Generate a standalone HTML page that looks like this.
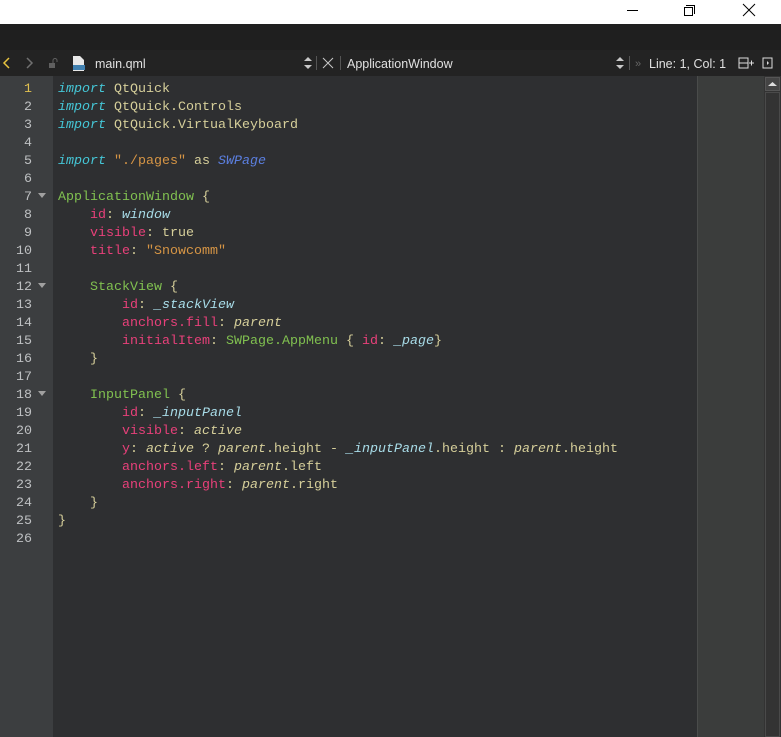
<!DOCTYPE html>
<html><head><style>
body{margin:0;width:781px;height:737px;overflow:hidden;background:#2e2f31;position:relative;font-family:"Liberation Sans",sans-serif}
.a{position:absolute}
#code{position:absolute;left:58px;top:81px;font-family:"Liberation Mono",monospace;font-size:13.33px;line-height:18px;color:#d6cf9a;white-space:pre}
#nums{position:absolute;left:0;top:81px;width:32px;text-align:right;font-family:"Liberation Mono",monospace;font-size:13.33px;line-height:18px;color:#bec0c2;white-space:pre}
.k{color:#45c6d6;font-style:italic}.s{color:#d69545}.b{color:#5b7fe0;font-style:italic}
.g{color:#80c050}.p{color:#e8407a}.i{color:#a8dce8;font-style:italic}.y{color:#d6cf9a;font-style:italic}.w{color:#d6cf9a}
.tri{position:absolute;left:38px;width:0;height:0;border-left:4px solid transparent;border-right:4px solid transparent;border-top:5px solid #a0a0a0}
.tb{position:absolute;top:51px;font-size:12.5px;color:#e0e0e0;line-height:26px}
</style></head><body>
<div class="a" style="left:0;top:0;width:781px;height:24px;background:#fff"></div>
<div class="a" style="left:627px;top:10px;width:11px;height:1px;background:#000"></div>
<div class="a" style="left:686px;top:5px;width:8px;height:8px;border:1px solid #000;border-left:none;border-bottom:none"></div>
<div class="a" style="left:684px;top:7px;width:7px;height:7px;border:1px solid #000;background:#fff"></div>
<svg class="a" style="left:742px;top:3px" width="14" height="14"><path d="M1 1L13 13M13 1L1 13" stroke="#000" stroke-width="1"/></svg>
<div class="a" style="left:0;top:24px;width:781px;height:26px;background:#1f1f1f"></div>
<div class="a" style="left:0;top:50px;width:781px;height:26px;background:#232323"></div>
<svg class="a" style="left:0;top:50px" width="120" height="26"><path d="M9 8L4 13L9 18" stroke="#e8c440" stroke-width="1.5" fill="none"/><path d="M27 8L32 13L27 18" stroke="#707070" stroke-width="1.5" fill="none"/>
<rect x="49" y="13" width="6" height="5" fill="#606060"/><path d="M53 13V10.5a2 2 0 0 1 4 0V12" stroke="#606060" fill="none"/>
<path d="M73 6h7l4 4v11h-11z" fill="#e8e8e8"/><rect x="73" y="15" width="12" height="5" fill="#4080b0"/></svg>
<div class="tb" style="left:95px">main.qml</div>
<svg class="a" style="left:300px;top:50px" width="50" height="26"><path d="M4 11L8 7L12 11zM4 15L8 19L12 15z" fill="#c8c8c8"/><rect x="16" y="6" width="1" height="14" fill="#555"/><path d="M23 8L33 18M33 8L23 18" stroke="#c8c8c8"/><rect x="40" y="6" width="1" height="14" fill="#555"/></svg>
<div class="tb" style="left:347px">ApplicationWindow</div>
<svg class="a" style="left:610px;top:50px" width="171" height="26"><path d="M6 11L10 7L14 11zM6 15L10 19L14 15z" fill="#c8c8c8"/><rect x="19" y="6" width="1" height="14" fill="#555"/><text x="25" y="17" fill="#666" font-size="11" font-family="Liberation Sans">»</text>
<rect x="129" y="8" width="9" height="10" fill="none" stroke="#ddd"/><path d="M129 13h9M139 13h5M141.5 10.5v5" stroke="#ddd"/><rect x="153" y="8" width="9" height="10" fill="none" stroke="#ddd"/><path d="M157 11l2 2l-2 2z" fill="#ddd"/></svg>
<div class="tb" style="left:649px">Line: 1, Col: 1</div>
<div class="a" style="left:0;top:76px;width:53px;height:661px;background:#3c3e40"></div>
<div class="a" style="left:697px;top:76px;width:67px;height:661px;background:#3b3d3c;border-left:1px solid #4a4c4b"></div>
<div class="a" style="left:764px;top:76px;width:17px;height:661px;background:#333"></div>
<div class="a" style="left:765px;top:77px;width:15px;height:14px;background:#444;border:1px solid #555;box-sizing:border-box"></div>
<svg class="a" style="left:765px;top:77px" width="15" height="14"><path d="M3 9L7.5 5L12 9z" fill="#ddd"/></svg>
<div class="a" style="left:765px;top:92px;width:15px;height:645px;border:1px solid #4a4a4a;box-sizing:border-box"></div>
<div id="nums"><span style="color:#e0c050">1</span>
2
3
4
5
6
7
8
9
10
11
12
13
14
15
16
17
18
19
20
21
22
23
24
25
26</div>
<div class="tri" style="top:193px"></div>
<div class="tri" style="top:283px"></div>
<div class="tri" style="top:391px"></div>
<div id="code"><span class="k">import</span> QtQuick
<span class="k">import</span> QtQuick.Controls
<span class="k">import</span> QtQuick.VirtualKeyboard

<span class="k">import</span> <span class="s">"./pages"</span> as <span class="b">SWPage</span>

<span class="g">ApplicationWindow</span> {
    <span class="p">id</span>: <span class="i">window</span>
    <span class="p">visible</span>: true
    <span class="p">title</span>: <span class="s">"Snowcomm"</span>

    <span class="g">StackView</span> {
        <span class="p">id</span>: <span class="i">_stackView</span>
        <span class="p">anchors.fill</span>: <span class="y">parent</span>
        <span class="p">initialItem</span>: <span class="g">SWPage.AppMenu</span> { <span class="p">id</span>: <span class="i">_page</span>}
    }

    <span class="g">InputPanel</span> {
        <span class="p">id</span>: <span class="i">_inputPanel</span>
        <span class="p">visible</span>: <span class="y">active</span>
        <span class="p">y</span>: <span class="y">active</span> ? <span class="y">parent</span>.height - <span class="i">_inputPanel</span>.height : <span class="y">parent</span>.height
        <span class="p">anchors.left</span>: <span class="y">parent</span>.left
        <span class="p">anchors.right</span>: <span class="y">parent</span>.right
    }
}
</div>
</body></html>
